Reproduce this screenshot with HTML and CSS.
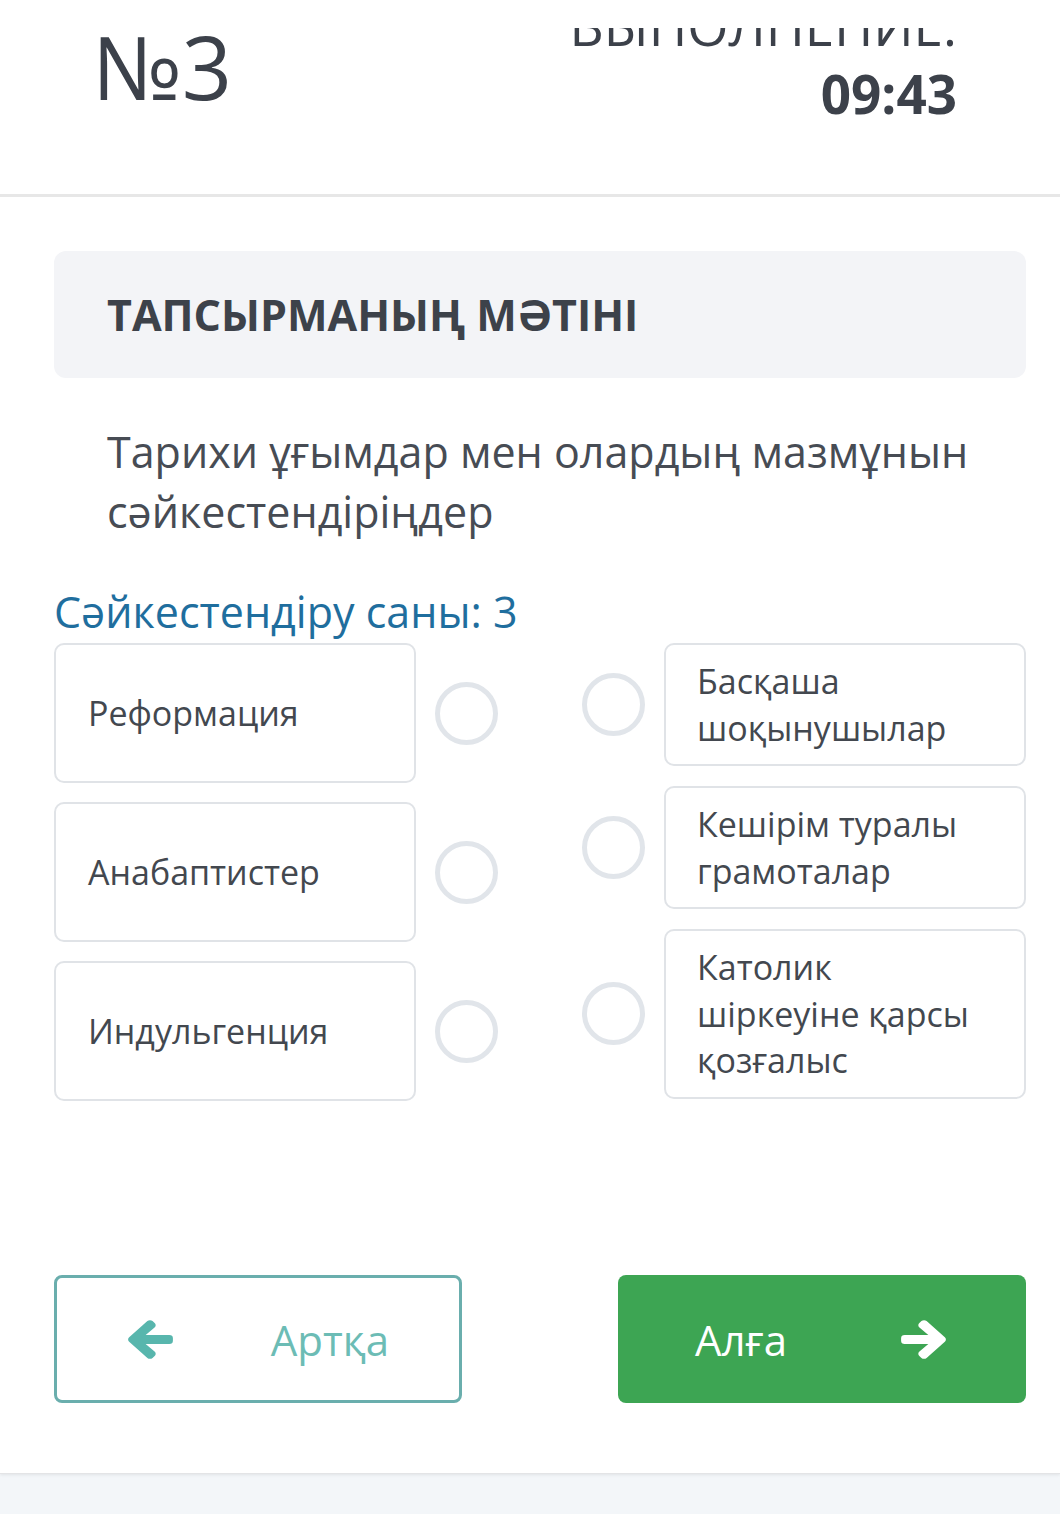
FILE: index.html
```html
<!DOCTYPE html>
<html lang="kk">
<head>
<meta charset="utf-8">
<title>Тапсырма №3</title>
<link rel="stylesheet" href="styles.css">
</head>
<body>
<div class="page">
  <header class="header">
    <div class="num">№3</div>
    <div class="timer">
      <div class="timer-clip"><div class="timer-label">ВЫПОЛНЕНИЕ:</div></div>
      <div class="timer-value">09:43</div>
    </div>
  </header>
  <main class="content">
    <div class="title-box">ТАПСЫРМАНЫҢ МӘТІНІ</div>
    <p class="question">Тарихи ұғымдар мен олардың мазмұнын сәйкестендіріңдер</p>
    <div class="count">Сәйкестендіру саны: 3</div>
    <div class="match">
      <div class="col col-left">
        <div class="item"><div class="card card-left">Реформация</div><span class="dot"></span></div>
        <div class="item"><div class="card card-left">Анабаптистер</div><span class="dot"></span></div>
        <div class="item"><div class="card card-left">Индульгенция</div><span class="dot"></span></div>
      </div>
      <div class="col col-right">
        <div class="item"><span class="dot"></span><div class="card card-right">Басқаша шоқынушылар</div></div>
        <div class="item"><span class="dot"></span><div class="card card-right">Кешірім туралы грамоталар</div></div>
        <div class="item"><span class="dot"></span><div class="card card-right">Католик шіркеуіне қарсы қозғалыс</div></div>
      </div>
    </div>
    <div class="nav">
      <button class="btn btn-back">
        <svg class="arrow" viewBox="-16 21 480 470" preserveAspectRatio="none"><path d="M257.5 445.1l-22.2 22.2c-9.4 9.4-24.6 9.4-33.9 0L7 273c-9.4-9.4-9.4-24.6 0-33.9L201.4 44.7c9.4-9.4 24.6-9.4 33.9 0l22.2 22.2c9.5 9.5 9.3 25-.4 34.3L136.6 216H424c13.3 0 24 10.7 24 24v32c0 13.3-10.7 24-24 24H136.6l120.5 114.8c9.8 9.3 10 24.8.4 34.3z"/></svg>
        <span>Артқа</span>
      </button>
      <button class="btn btn-next">
        <span>Алға</span>
        <svg class="arrow" viewBox="-16 21 480 470" preserveAspectRatio="none"><path d="M190.5 66.9l22.2-22.2c9.4-9.4 24.6-9.4 33.9 0L441 239c9.4 9.4 9.4 24.6 0 33.9L246.6 467.3c-9.4 9.4-24.6 9.4-33.9 0l-22.2-22.2c-9.5-9.5-9.3-25 .4-34.3L311.4 296H24c-13.3 0-24-10.7-24-24v-32c0-13.3 10.7-24 24-24h287.4L190.9 101.2c-9.8-9.3-10-24.8-.4-34.3z"/></svg>
      </button>
    </div>
  </main>
</div>
</body>
</html>
```

FILE: styles.css
```css
* { box-sizing: border-box; }

html, body {
  margin: 0;
  padding: 0;
}

body {
  background: linear-gradient(#eaebed, #f3f6f9 40px);
  background-color: #f3f6f9;
  font-family: "Open Sans", "Noto Sans", sans-serif;
  color: #3e434b;
  min-height: 1514px;
}

.page {
  width: 1060px;
  height: 1474px;
  background: #ffffff;
  box-shadow: 0 1px 3px rgba(0, 0, 0, 0.08);
  border-bottom: 1px solid #e3e4e6;
}

/* Header */
.header {
  height: 197px;
  border-bottom: 3px solid #e7e7e7;
  display: flex;
  justify-content: space-between;
  align-items: flex-start;
  padding: 0 103px 0 92px;
}

.num {
  font-size: 88px;
  line-height: 88px;
  margin-top: 22px;
  font-weight: 400;
  color: #3c414a;
}

.timer {
  text-align: right;
  color: #3c414a;
}

.timer-clip {
  margin-top: 28px;
  height: 19px;
  overflow: hidden;
}

.timer-label {
  font-size: 53px;
  line-height: 68px;
  margin-top: -35.6px;
}

.timer-value {
  font-size: 53px;
  line-height: 68px;
  font-weight: 700;
  margin-top: 13.4px;
}

/* Content */
.content {
  padding: 0 34px 0 54px;
}

.title-box {
  margin-top: 54px;
  height: 127px;
  background: #f3f4f7;
  border-radius: 12px;
  display: flex;
  align-items: center;
  padding: 0 53px;
  font-size: 43px;
  font-weight: 700;
  color: #3d424a;
}

.question {
  margin: 44px 0 0;
  padding-left: 53px;
  font-size: 43px;
  line-height: 60px;
  color: #474c54;
}

.count {
  margin-top: 41px;
  font-size: 43px;
  line-height: 58px;
  color: #1f6e9e;
}

.match {
  margin-top: 2px;
  display: grid;
  grid-template-columns: 444px 444px;
  justify-content: space-between;
  align-items: start;
}

.col {
  display: flex;
  flex-direction: column;
}

.col-left { gap: 19px; }
.col-right { gap: 20px; }

.item {
  display: flex;
  align-items: center;
  gap: 19px;
}

.card {
  width: 362px;
  border: 2px solid #e0e3e7;
  border-radius: 10px;
  font-size: 34px;
  line-height: 46.5px;
  color: #43484f;
  background: #fff;
}

.card-left {
  height: 140px;
  display: flex;
  align-items: center;
  padding: 0 20px 0 32px;
}

.card-right {
  padding: 13px 28px 13px 31px;
}

.dot {
  flex: none;
  width: 63px;
  height: 63px;
  border: 5px solid #e1e5ea;
  border-radius: 50%;
}

/* Buttons */
.nav {
  margin-top: 174px;
  display: flex;
  justify-content: space-between;
}

.btn {
  width: 408px;
  height: 128px;
  border-radius: 8px;
  display: flex;
  align-items: center;
  justify-content: space-between;
  font-family: "Open Sans", "Noto Sans", sans-serif;
  font-size: 42px;
  cursor: pointer;
}

.btn-back {
  background: #fff;
  border: 3px solid #6aaead;
  color: #6cbcb5;
  padding: 0 70px 0 71px;
}

.btn-back .arrow { fill: #58b6ad; stroke: #58b6ad; }

.btn-next {
  background: #3da553;
  border: none;
  color: #ffffff;
  padding: 0 80px 0 77px;
}

.btn-next .arrow { fill: #ffffff; stroke: #ffffff; }

.arrow {
  width: 45px;
  height: 39px;
  display: block;
  stroke-width: 30;
  stroke-linejoin: round;
}
```
